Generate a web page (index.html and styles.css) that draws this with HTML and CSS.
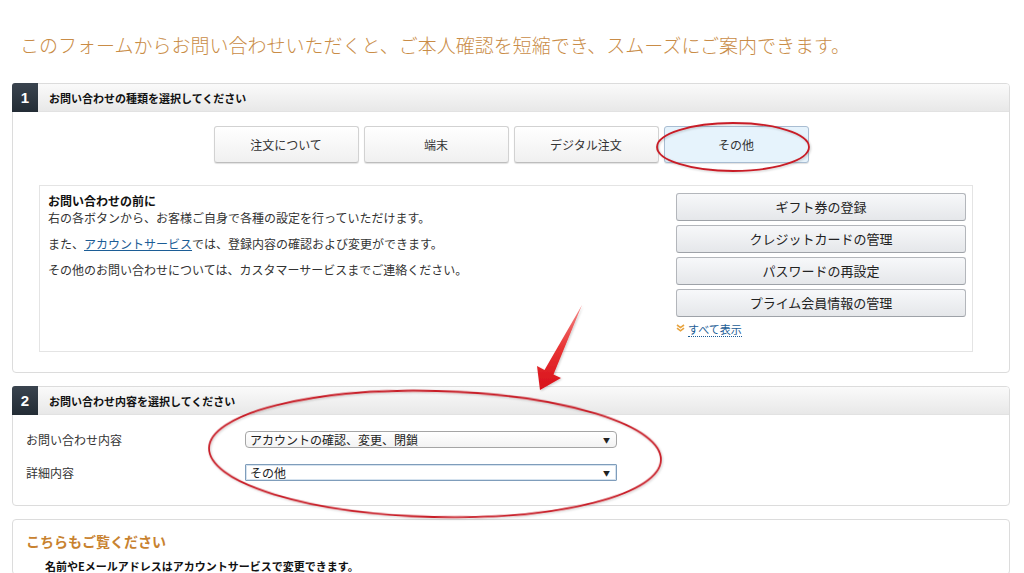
FILE: index.html
```html
<!DOCTYPE html>
<html lang="ja">
<head>
<meta charset="utf-8">
<title>お問い合わせ</title>
<link rel="stylesheet" href="styles.css">
</head>
<body>
<div class="page">
  <h1 class="intro">このフォームからお問い合わせいただくと、ご本人確認を短縮でき、スムーズにご案内できます。</h1>

  <section class="panel">
    <div class="panel-head"><span class="num">1</span><span class="head-title">お問い合わせの種類を選択してください</span></div>
    <div class="tabs">
      <button class="tab">注文について</button>
      <button class="tab">端末</button>
      <button class="tab">デジタル注文</button>
      <button class="tab tab-active">その他</button>
    </div>
    <div class="info-box">
      <div class="info-text">
        <h3 class="info-title">お問い合わせの前に</h3>
        <p class="info-line">右の各ボタンから、お客様ご自身で各種の設定を行っていただけます。</p>
        <p class="info-line gap">また、<a class="link" href="#">アカウントサービス</a>では、登録内容の確認および変更ができます。</p>
        <p class="info-line gap">その他のお問い合わせについては、カスタマーサービスまでご連絡ください。</p>
      </div>
      <div class="info-actions">
        <a class="action" href="#">ギフト券の登録</a>
        <a class="action" href="#">クレジットカードの管理</a>
        <a class="action" href="#">パスワードの再設定</a>
        <a class="action" href="#">プライム会員情報の管理</a>
        <div class="show-all">
          <svg class="chev" width="9" height="8" viewBox="0 0 9 8"><path d="M1 1 L4.5 3.6 L8 1 M1 4.2 L4.5 6.8 L8 4.2" fill="none" stroke="#e8a33d" stroke-width="1.6"/></svg>
          <a class="show-link" href="#">すべて表示</a>
        </div>
      </div>
    </div>
  </section>

  <section class="panel">
    <div class="panel-head"><span class="num">2</span><span class="head-title">お問い合わせ内容を選択してください</span></div>
    <div class="form">
      <div class="row">
        <span class="label">お問い合わせ内容</span>
        <div class="select"><span>アカウントの確認、変更、閉鎖</span><span class="caret">▼</span></div>
      </div>
      <div class="row">
        <span class="label">詳細内容</span>
        <div class="select select-focus"><span>その他</span><span class="caret">▼</span></div>
      </div>
    </div>
  </section>

  <section class="panel panel-see">
    <h2 class="see-title">こちらもご覧ください</h2>
    <p class="see-line">名前やEメールアドレスはアカウントサービスで変更できます。</p>
  </section>
</div>

<svg class="annot" width="1024" height="573" viewBox="0 0 1024 573">
  <defs>
    <linearGradient id="ar" x1="0" y1="0" x2="0" y2="1">
      <stop offset="0" stop-color="#f48a8a"/>
      <stop offset="0.5" stop-color="#e83434"/>
      <stop offset="1" stop-color="#d8101a"/>
    </linearGradient>
    <filter id="sh" x="-20%" y="-20%" width="140%" height="140%">
      <feDropShadow dx="1" dy="1" stdDeviation="1" flood-color="#000" flood-opacity="0.2"/>
    </filter>
  </defs>
  <ellipse cx="733" cy="147" rx="76" ry="24" fill="none" stroke="#c81e28" stroke-width="1.8" filter="url(#sh)"/>
  <ellipse cx="435" cy="454" rx="226" ry="63" fill="none" stroke="#c81e28" stroke-width="1.8" filter="url(#sh)" transform="rotate(1.5 435 454)"/>
  <polygon points="582,305 553.5,374.5 561,378 540,390 537,366 544.5,370" fill="url(#ar)" filter="url(#sh)"/>
</svg>
</body>
</html>
```

FILE: styles.css
```css
html, body {
  margin: 0;
  padding: 0;
  background: #fff;
  overflow: hidden;
}

body {
  position: relative;
  font-family: "Noto Sans CJK JP", "Noto Sans", sans-serif;
  color: #333;
}

.page {
  padding: 33px 14px 0 12px;
}

.intro {
  margin: 0 0 26px 8px;
  font-size: 19px;
  line-height: 24px;
  font-weight: 300;
  color: #c98c46;
  white-space: nowrap;
}

.panel {
  border: 1px solid #dcdcdc;
  border-radius: 4px;
  background: #fff;
}

.panel + .panel {
  margin-top: 13px;
}

.panel-head {
  display: flex;
  align-items: center;
  height: 27px;
  background: linear-gradient(#fafafa, #e8e8e8);
  border-bottom: 1px solid #e2e2e2;
  border-radius: 3px 3px 0 0;
}

.num {
  align-self: stretch;
  width: 26px;
  margin: -1px 0 -1px -1px;
  background: linear-gradient(#3a444f, #232c35);
  color: #fff;
  font-family: "Liberation Sans", Arial, sans-serif;
  font-weight: bold;
  font-size: 15px;
  display: flex;
  align-items: center;
  justify-content: center;
  border-radius: 3px 0 0 0;
}

.head-title {
  margin-left: 11px;
  font-size: 11px;
  font-weight: bold;
  color: #111;
}

.tabs {
  display: flex;
  justify-content: center;
  gap: 5px;
  margin-top: 14px;
}

.tab {
  width: 145px;
  height: 37px;
  box-sizing: border-box;
  border: 1px solid #d2d2d2;
  border-bottom-color: #bdbdbd;
  border-radius: 3px;
  background: linear-gradient(#ffffff, #f0f0f0);
  box-shadow: 0 1px 1px rgba(0, 0, 0, 0.12);
  font-family: inherit;
  font-size: 12px;
  color: #333;
  padding: 0;
}

.tab-active {
  background: #e6f3fc;
  border-color: #a9bdd2;
}

.info-box {
  display: flex;
  justify-content: space-between;
  margin: 22px 36px 20px 26px;
  border: 1px solid #e4e4e4;
  padding: 7px 6px 13px 8px;
}

.info-title {
  margin: 0;
  font-size: 12px;
  line-height: 16px;
  font-weight: bold;
  color: #111;
}

.info-line {
  margin: 0;
  font-size: 12px;
  line-height: 17px;
  color: #333;
}

.info-line.gap {
  margin-top: 9px;
}

.link {
  color: #1c5d96;
  text-decoration: underline;
}

.info-actions {
  width: 290px;
}

.action {
  display: block;
  height: 28px;
  box-sizing: border-box;
  border: 1px solid #b3b6bb;
  border-bottom-color: #9ea2a8;
  border-radius: 3px;
  background: linear-gradient(#f7f8fa, #e5e7ea);
  font-size: 13px;
  line-height: 26px;
  text-align: center;
  color: #222;
  text-decoration: none;
  margin-bottom: 4px;
}

.show-all {
  display: flex;
  align-items: center;
  gap: 3px;
  height: 17px;
}

.chev {
  margin-top: -4px;
}

.show-link {
  font-size: 11px;
  line-height: 14px;
  color: #1c5d96;
  text-decoration: none;
  border-bottom: 1px dotted #1c5d96;
}

.form {
  padding: 16px 0 24px 13px;
}

.row {
  display: flex;
  align-items: center;
  height: 17px;
}

.row + .row {
  margin-top: 16px;
}

.label {
  width: 219px;
  font-size: 12px;
  color: #333;
}

.select {
  width: 372px;
  height: 17px;
  box-sizing: border-box;
  border: 1px solid #a5a5a5;
  border-radius: 4px;
  background: linear-gradient(#ffffff, #f3f3f3);
  display: flex;
  justify-content: space-between;
  align-items: center;
  padding: 0 6px 0 4px;
  font-size: 12px;
  color: #222;
}

.select-focus {
  border-color: #7f9dbb;
  border-radius: 1px;
  background: #fff;
  box-shadow: inset 0 0 0 1px #d6e3ef;
}

.caret {
  font-size: 7px;
  color: #222;
}

.panel-see {
  padding: 12px 13px 0 13px;
}

.see-title {
  margin: 0;
  font-size: 14px;
  line-height: 18px;
  font-weight: bold;
  color: #c8822f;
}

.see-line {
  margin: 8px 0 0 19px;
  font-size: 11px;
  line-height: 16px;
  font-weight: bold;
  color: #111;
}

.annot {
  position: absolute;
  top: 0;
  left: 0;
  pointer-events: none;
}
```
